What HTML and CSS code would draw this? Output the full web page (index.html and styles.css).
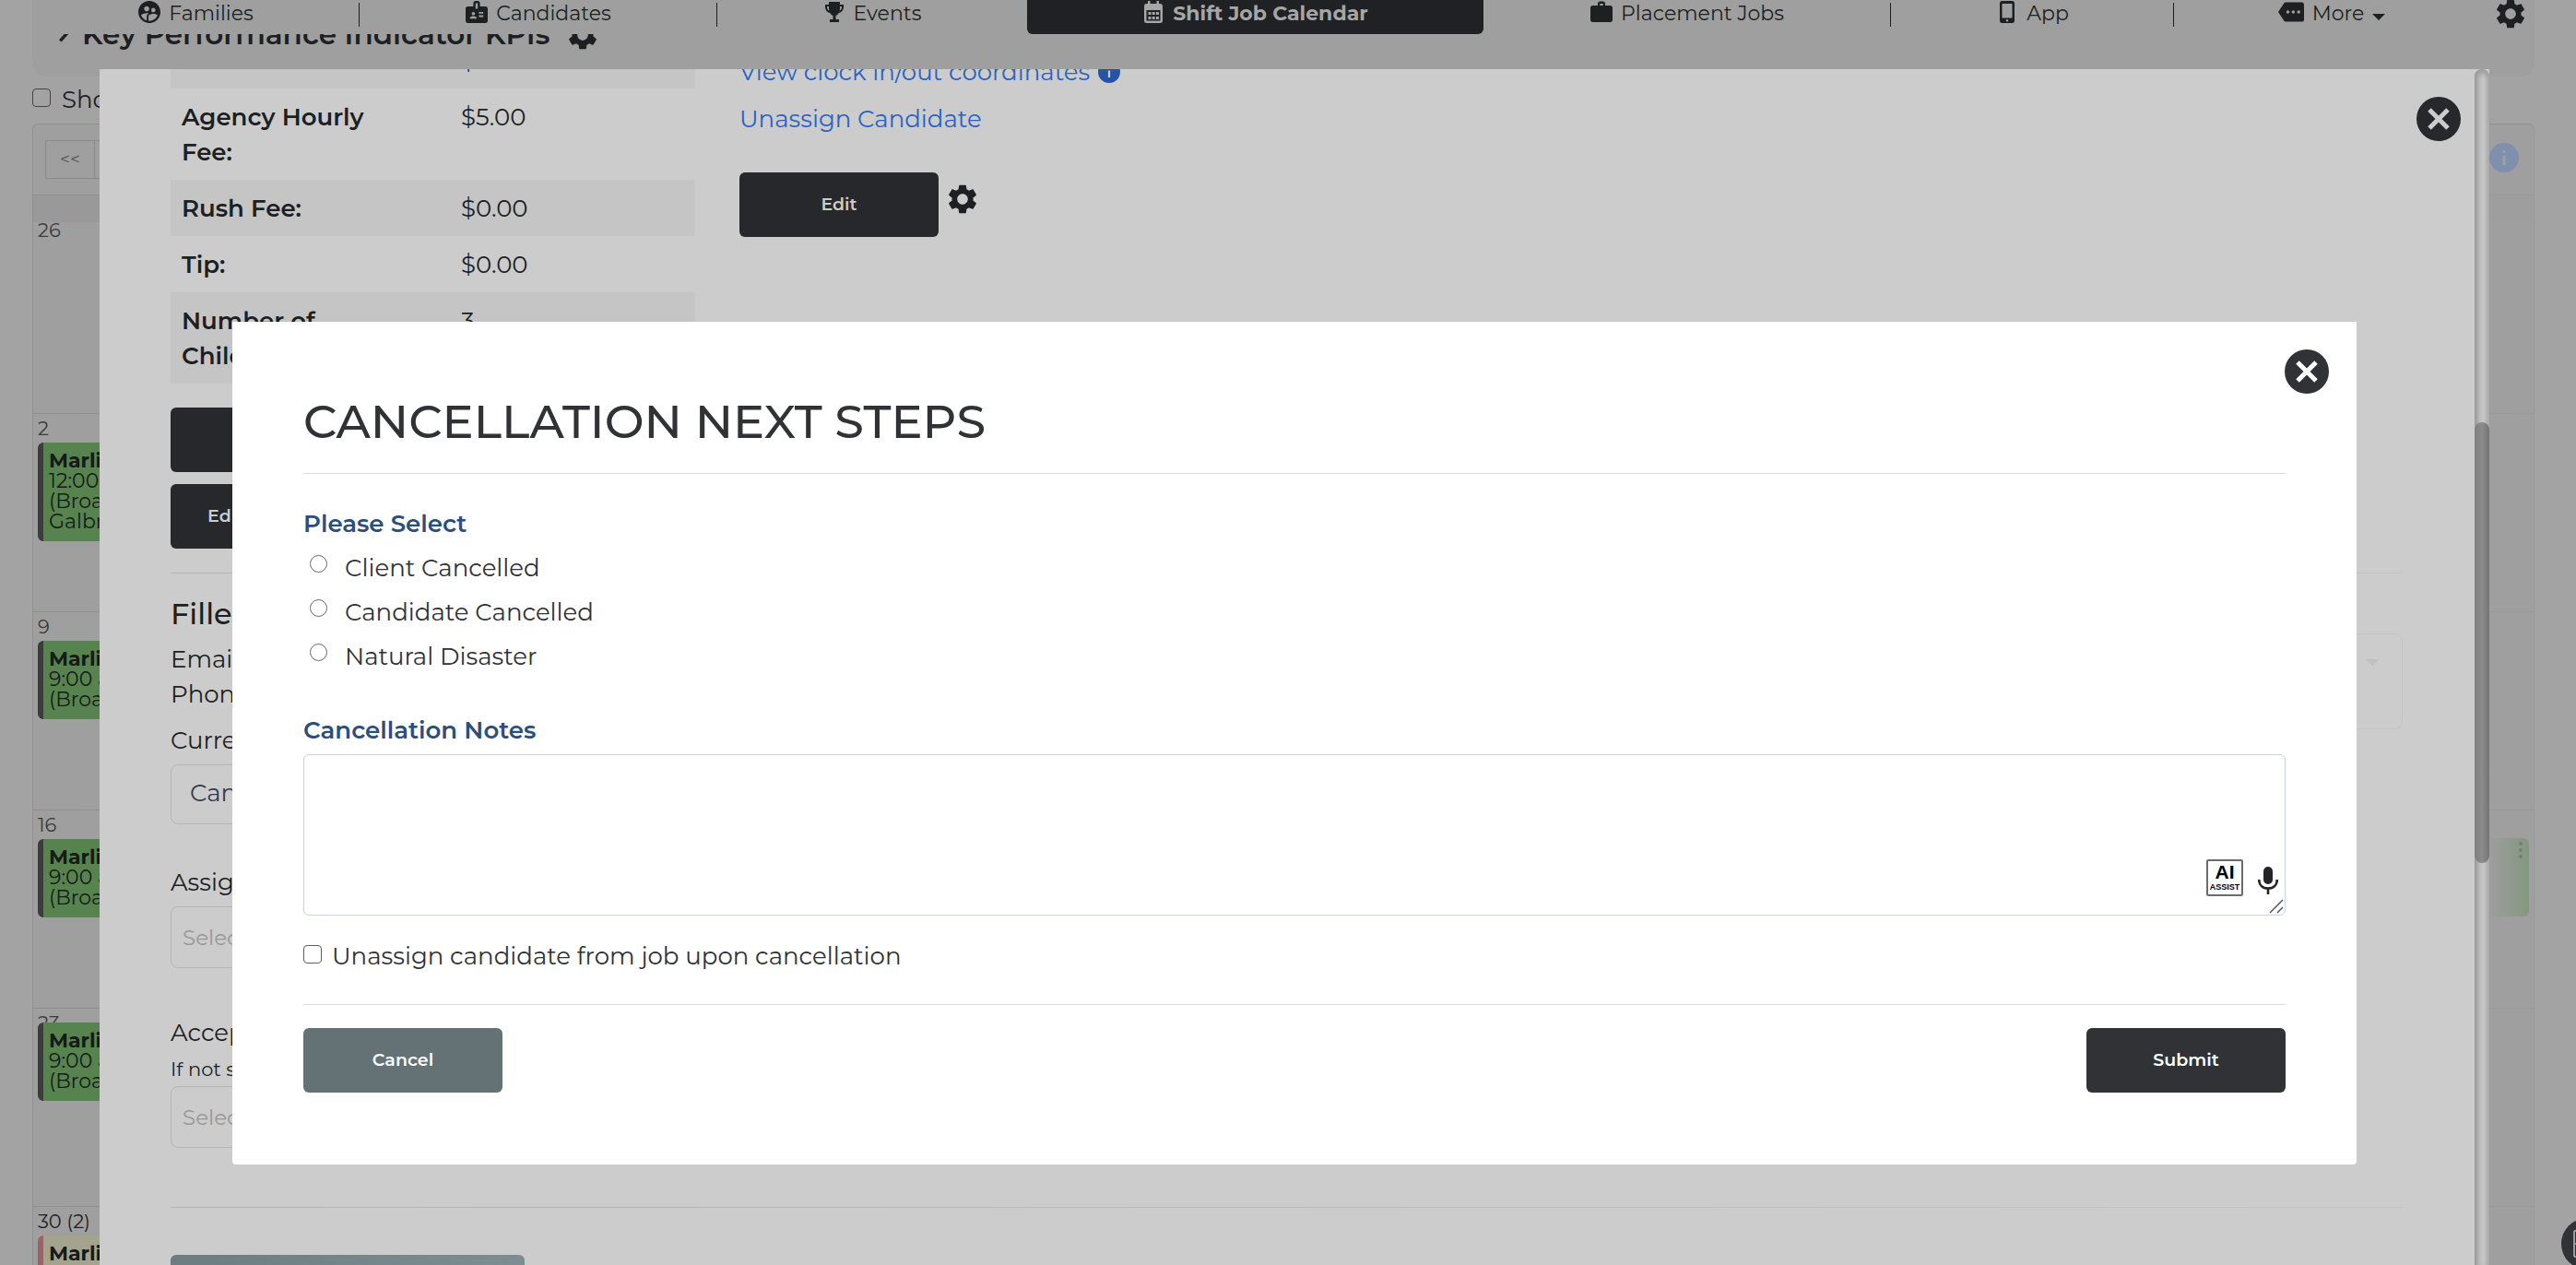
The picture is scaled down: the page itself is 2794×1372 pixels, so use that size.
FILE: index.html
```html
<!DOCTYPE html>
<html lang="en">
<head>
<meta charset="utf-8">
<title>Shift Job Calendar</title>
<link rel="stylesheet" href="styles.css">
</head>
<body>
<svg class="defs" aria-hidden="true">
  <symbol id="gear" viewBox="2 2 20 20"><path d="M19.14 12.94c.04-.3.06-.61.06-.94 0-.32-.02-.64-.07-.94l2.03-1.58c.18-.14.23-.41.12-.61l-1.92-3.32c-.12-.22-.37-.29-.59-.22l-2.39.96c-.5-.38-1.03-.7-1.62-.94l-.36-2.54c-.04-.24-.24-.41-.48-.41h-3.84c-.24 0-.43.17-.47.41l-.36 2.54c-.59.24-1.13.57-1.62.94l-2.39-.96c-.22-.08-.47 0-.59.22L2.74 8.87c-.12.21-.08.47.12.61l2.03 1.58c-.05.3-.09.63-.09.94s.02.64.07.94l-2.03 1.58c-.18.14-.23.41-.12.61l1.92 3.32c.12.22.37.29.59.22l2.39-.96c.5.38 1.03.7 1.62.94l.36 2.54c.05.24.24.41.48.41h3.84c.24 0 .44-.17.47-.41l.36-2.54c.59-.24 1.13-.56 1.62-.94l2.39.96c.22.08.47 0 .59-.22l1.92-3.32c.12-.22.07-.47-.12-.61l-2.01-1.58zM12 15.6c-1.98 0-3.6-1.62-3.6-3.6s1.62-3.6 3.6-3.6 3.6 1.62 3.6 3.6-1.62 3.6-3.6 3.6z"/></symbol>
  <symbol id="close" viewBox="0 0 48 48"><circle cx="24" cy="24" r="24"/><path d="M14 14 34 34M34 14 14 34" fill="none" stroke="var(--cross)" stroke-width="5"/></symbol>
  <symbol id="info" viewBox="0 0 32 32"><circle cx="16" cy="16" r="16"/><path d="M14.500 8h3v3h-3zM14.500 14h3v10h-3z" fill="var(--cross)"/></symbol>
</svg>

<nav class="nav">
  <a href="#"><svg viewBox="2 2 20 20"><path d="M11.99 2c-5.520 0-10 4.480-10 10s4.480 10 10 10 10-4.480 10-10-4.480-10-10-10zm3.610 6.340c1.070 0 1.930.860 1.930 1.930 0 1.070-.860 1.930-1.930 1.930-1.070 0-1.930-.860-1.930-1.930-.010-1.070.860-1.930 1.930-1.930zm-6-1.580c1.300 0 2.360 1.060 2.360 2.360 0 1.300-1.060 2.360-2.360 2.360s-2.360-1.060-2.360-2.360c0-1.310 1.050-2.360 2.360-2.360zm0 9.130v3.750c-2.400-.750-4.300-2.600-5.140-4.960 1.050-1.120 3.670-1.690 5.140-1.690.530 0 1.200.080 1.900.220-1.640.870-1.900 2.020-1.900 2.680zM11.990 20c-.270 0-.530-.010-.790-.040v-4.070c0-1.420 2.940-2.130 4.400-2.130 1.070 0 2.920.390 3.840 1.150-1.170 2.970-4.060 5.090-7.450 5.090z"/></svg>Families</a>
  <a href="#"><svg viewBox="2 2 20 20"><path d="M20 7h-5V4c0-1.100-.900-2-2-2h-2c-1.100 0-2 .900-2 2v3H4c-1.100 0-2 .900-2 2v11c0 1.100.900 2 2 2h16c1.100 0 2-.900 2-2V9c0-1.100-.900-2-2-2zM9 12c.830 0 1.500.670 1.500 1.500S9.830 15 9 15s-1.500-.670-1.500-1.500S8.170 12 9 12zm3 6H6v-.750c0-1 2-1.500 3-1.500s3 .500 3 1.500V18zm1-9h-2V4h2v5zm5 7.500h-4V15h4v1.500zm0-3h-4V12h4v1.500z"/></svg>Candidates</a>
  <a href="#" class="no-line"><svg viewBox="0 0 24 24"><path d="M6 1h12v3h4v2c0 4-2 6.500-5.200 7-.9 1.600-2 2.500-3.300 2.900V20H17v3H7v-3h3.500v-4.100C9.200 15.500 8.100 14.600 7.200 13 4 12.500 2 10 2 6V4h4zM4 6c0 2.300.8 3.900 2.300 4.600C6 9.300 6 7.500 6 6zm16 0h-2c0 1.500 0 3.300-.3 4.600C19.200 9.900 20 8.300 20 6z"/></svg>Events</a>
  <a href="#" class="active no-line"><svg viewBox="0 0 24 24"><path fill-rule="evenodd" d="M6 0h2.500v3h7V0H18v3h1.500C21 3 22 4 22 5.500v16c0 1.500-1 2.500-2.500 2.500h-15C3 24 2 23 2 21.500v-16C2 4 3 3 4.500 3H6zM4.500 10v11.500h15V10zM6.500 12h3v3h-3zm4.200 0h3v3h-3zm4.200 0h3v3h-3zm-8.400 5h3v3h-3zm4.200 0h3v3h-3zm4.200 0h3v3h-3z"/></svg>Shift Job Calendar</a>
  <a href="#"><svg viewBox="0 0 24 24"><path fill-rule="evenodd" d="M8 5V3c0-1.500 1-2.500 2.500-2.500h3C15 .5 16 1.500 16 3v2h5.500C23 5 24 6 24 7.500v13c0 1.500-1 2.500-2.500 2.500h-19C1 23 0 22 0 20.500v-13C0 6 1 5 2.500 5zm2.300 0h3.400V3h-3.400z"/></svg>Placement Jobs</a>
  <a href="#"><svg viewBox="0 0 24 24"><path fill-rule="evenodd" d="M6.500 0h11C19 0 20 1 20 2.500v19c0 1.500-1 2.500-2.500 2.500h-11C5 24 4 23 4 21.500v-19C4 1 5 0 6.500 0zM6.500 3v15.500h11V3zM12 20a1.300 1.300 0 1 0 0 2.600 1.300 1.300 0 0 0 0-2.600z"/></svg>App</a>
  <a href="#" class="no-line"><svg class="wide" viewBox="0 2 24 20"><path d="M22 3H7c-.690 0-1.230.350-1.590.880L0 12l5.410 8.110c.360.530.970.890 1.660.890H22c1.100 0 2-.900 2-2V5c0-1.100-.900-2-2-2zM9 13.500a1.500 1.500 0 1 1 0-3 1.500 1.500 0 0 1 0 3zm5 0a1.500 1.500 0 1 1 0-3 1.500 1.500 0 0 1 0 3zm5 0a1.500 1.500 0 1 1 0-3 1.500 1.500 0 0 1 0 3z"/></svg>More<i class="caret"></i></a>
  <button class="icon-button" aria-label="Settings"><svg><use href="#gear"/></svg></button>
</nav>

<main class="page">
  <section class="kpi">
    <svg class="chevron" viewBox="0 0 14 24"><path d="M2 2l9 10L2 22" fill="none" stroke="currentColor" stroke-width="3"/></svg>
    <h2>Key Performance Indicator KPIs</h2>
    <svg class="gear"><use href="#gear"/></svg>
  </section>
  <label class="show"><input type="checkbox"> Show All</label>
  <section class="calendar">
    <div class="toolbar"><div class="pager"><button>&lt;&lt;</button><button>&lt;</button></div><svg class="cal-info"><use href="#info"/></svg></div>
    <div class="day-head"></div>
    <div class="week first"><div>26</div></div>
    <div class="week"><div>2<article class="event"><b>Marlin</b><br>12:00 pm<br>(Broadway)<br>Galbraith</article></div></div>
    <div class="week"><div>9<article class="event"><b>Marlin</b><br>9:00 am<br>(Broadway)</article></div></div>
    <div class="week"><div>16<article class="event"><b>Marlin</b><br>9:00 am<br>(Broadway)</article></div><div class="last"><article class="event pale"><i></i><i></i><i></i></article></div></div>
    <div class="week"><div>23<article class="event raised"><b>Marlin</b><br>9:00 am<br>(Broadway)</article></div></div>
    <div class="week today"><div>30 (2)<article class="event beige"><b>Marlin</b></article></div></div>
  </section>
</main>

<section class="job-modal">
  <div class="job-body">
    <div class="job-top">
      <table>
        <tr><th>Service Fee:</th><td>$0.00</td></tr>
        <tr><th>Agency Hourly Fee:</th><td>$5.00</td></tr>
        <tr><th>Rush Fee:</th><td>$0.00</td></tr>
        <tr><th>Tip:</th><td>$0.00</td></tr>
        <tr><th>Number of Children:</th><td>3</td></tr>
      </table>
      <div class="links">
        <p><a href="#">View clock in/out coordinates</a><svg class="info"><use href="#info"/></svg></p>
        <p><a href="#">Unassign Candidate</a></p>
        <div class="edit-row"><button class="btn">Edit</button><svg class="gear"><use href="#gear"/></svg></div>
      </div>
    </div>
    <div class="stack"><button class="btn wide">View</button><button class="btn wide">Edit Job</button></div>
    <hr>
    <div class="filled">
      <div class="details">
        <h3>Filled By</h3>
        <p>Email:<br>Phone:</p>
        <label for="status">Current Status</label>
        <select id="status"><option>Candidate</option></select>
        <label for="assign" class="spaced">Assigned</label>
        <input id="assign" placeholder="Select">
        <label for="accept" class="spaced">Accepted</label>
        <small>If not selected</small>
        <input id="accept" placeholder="Select">
      </div>
      <div class="picker"><i class="caret"></i></div>
    </div>
    <hr class="lower">
    <button class="more-btn" aria-label="More details"></button>
  </div>
  <button class="close" aria-label="Close job"><svg><use href="#close"/></svg></button>
  <div class="track"><div class="thumb"></div></div>
</section>

<form class="cancel-modal" onsubmit="return false">
  <button type="button" class="close" aria-label="Close"><svg><use href="#close"/></svg></button>
  <h1>CANCELLATION NEXT STEPS</h1>
  <hr>
  <fieldset>
    <legend>Please Select</legend>
    <label><input type="radio" name="reason">Client Cancelled</label>
    <label><input type="radio" name="reason">Candidate Cancelled</label>
    <label><input type="radio" name="reason">Natural Disaster</label>
  </fieldset>
  <label class="title" for="notes">Cancellation Notes</label>
  <div class="notes">
    <textarea id="notes"></textarea>
    <div class="tools">
      <button type="button" class="ai"><b>AI</b><span>ASSIST</span></button>
      <button type="button" class="mic" aria-label="Dictate"><svg viewBox="0 0 22 30"><rect x="6" y="0" width="10" height="19" rx="5"/><path d="M1.200 14c0 6 4 9.500 9.800 9.500s9.800-3.500 9.800-9.500M11 23v7" fill="none" stroke="currentColor" stroke-width="2.600"/></svg></button>
    </div>
    <svg class="grip" viewBox="0 0 16 16"><path d="M1 15 15 1M9 15l6-6" stroke="#555" stroke-width="1.500"/></svg>
  </div>
  <label class="check"><input type="checkbox">Unassign candidate from job upon cancellation</label>
  <hr>
  <div class="actions"><button type="button" class="btn grey">Cancel</button><button class="btn">Submit</button></div>
</form>

<button class="chat" aria-label="Chat"><svg viewBox="0 0 56 56"><path d="M14 14v28M14 14h20M14 28h20M14 42h20" fill="none" stroke="#9a9a9a" stroke-width="2"/></svg></button>
</body>
</html>
```
FILE: styles.css
```css
* { box-sizing: border-box; }
body {
  margin: 0;
  height: 100vh;
  overflow: hidden;
  background: #a3a3a3;
  color: #1d1f22;
  font: 400 26px/38px Montserrat, Inter, sans-serif;
}
button, input, select, textarea { font: inherit; color: inherit; margin: 0; }
button { padding: 0; border: 0; background: none; }
h1, h2, h3, p { margin: 0; }
svg { display: block; flex: none; fill: currentColor; }
.defs { position: absolute; width: 0; height: 0; }
.caret { border: 7px solid transparent; border-top-color: currentColor; border-bottom: 0; }
.gear { width: 32px; height: 32px; }
input[type="checkbox"] {
  appearance: none;
  flex: none;
  width: 20px;
  height: 20px;
  border: 1px solid #5c5c5c;
  border-radius: 4px;
}

/* top navigation */
.nav {
  position: relative;
  z-index: 1;
  display: grid;
  grid-template-columns: 355fr 388fr 336fr 495fr 442fr 307fr 342fr 49fr;
  height: 37px;
  margin: 0 45px 0 35px;
  background: #9f9f9f;
}
.nav a {
  position: relative;
  display: flex;
  align-items: center;
  justify-content: center;
  gap: 9px;
  height: 37px;
  padding-bottom: 7px;
  color: inherit;
  font-size: 22px;
  line-height: 30px;
  text-decoration: none;
}
.nav a::after {
  content: "";
  position: absolute;
  right: 0;
  top: 3px;
  width: 1px;
  height: 26px;
  background: #1d1f22;
}
.nav .no-line::after { display: none; }
.nav svg { width: 24px; height: 24px; margin-bottom: 4px; }
.nav svg.wide { width: 28px; }
.nav .caret { margin-top: 6px; }
.nav .active {
  border-radius: 0 0 6px 6px;
  background: #1f2124;
  color: #a6a6a6;
  font-weight: 700;
}
.nav .icon-button svg { width: 32px; height: 32px; margin: -1px 0 6px 7px; }

/* calendar page */
.page { margin: 0 45px 0 35px; }
.kpi {
  display: flex;
  gap: 14px;
  height: 46px;
  padding-left: 28px;
  border-radius: 0 0 16px 16px;
  background: #9f9f9f;
}
.kpi .chevron { width: 16px; height: 28px; margin-top: -18px; }
.kpi h2 { margin: -19px 5px 0 -4px; font-size: 31px; font-weight: 600; }
.kpi .gear { margin-top: -15px; }
.show { display: flex; align-items: center; gap: 12px; width: 200px; margin: 6px 0 7px; }
.check input, .show input { margin-bottom: 4px; }
.show input { border-color: #444; }
.calendar { border: 1px solid #919191; border-right-color: #999; border-radius: 6px 6px 0 0; background: #9f9f9f; }
.toolbar { display: flex; justify-content: space-between; height: 76px; padding: 17px 16px 0 13px; }
.pager { display: flex; height: 42px; }
.pager button { width: 54px; border: 1px solid #8a8a8a; margin-right: -1px; color: #555; font-size: 19px; }
.cal-info { --cross: #a0a0a0; width: 32px; height: 32px; margin-top: 3px; color: #7f8fae; }
.day-head {
  height: 22px;
  background: linear-gradient(90deg, #8f8f8f, #9a9a9a) top / 100% 1px no-repeat, linear-gradient(90deg, #999, #9e9e9e);
}
.week {
  display: grid;
  grid-template-columns: repeat(7, 1fr);
  height: 215px;
  padding-top: 2px;
  background: linear-gradient(90deg, #8f8f8f, #9a9a9a) top / 100% 1px no-repeat;
  color: #3b3b3b;
  font-size: 21px;
  line-height: 30px;
}
.week.first { background: linear-gradient(90deg, #999, #9e9e9e) top / 100% 8px no-repeat; }
.week > div { padding-left: 5px; }
.week.today { color: #1d1f22; }
.week .last { grid-column: 7; padding: 29px 5px 0 0; }
.event {
  padding: 9px 0 10px 6px;
  border-left: 6px solid #3c3c3c;
  border-radius: 6px;
  background: #57834e;
  color: #17191a;
  font-size: 22px;
  line-height: 22px;
}
.event.raised { position: relative; margin-top: -16px; }
.event.beige { border-color: #9b6464; background: #a3a38e; }
.event.pale {
  display: grid;
  justify-items: end;
  align-content: start;
  gap: 3px;
  height: 85px;
  padding: 4px 7px;
  border: 0;
  background: linear-gradient(90deg, #9f9f9f 88%, #84977f);
}
.pale i { width: 4px; height: 4px; border-radius: 2px; background: #6f826f; }

/* job details modal */
.job-modal {
  position: fixed;
  z-index: 2;
  inset: 75px 94px 0 108px;
  overflow: hidden;
  background: #ccc;
}
.job-body { margin: -40px 94px 0 77px; }
.job-top { display: flex; gap: 48px; }
table { width: 569px; border-collapse: collapse; table-layout: fixed; }
tr:nth-child(odd) { background: #c5c5c5; }
th, td { padding: 12px 12px 11px; text-align: left; vertical-align: top; }
th { width: 303px; padding-right: 90px; font-weight: 600; }
.links p { display: flex; gap: 9px; margin: 24px 0 -11px; }
.links a { color: #2b62c4; text-decoration: none; }
.links .info { --cross: #ccc; width: 24px; height: 24px; margin-top: 7px; color: #2454a8; }
.edit-row { display: flex; gap: 10px; margin-top: 50px; }
.edit-row .gear { margin-top: 13px; }
.btn {
  width: 216px;
  height: 70px;
  border-radius: 6px;
  background: #313236;
  color: #fff;
  font-size: 19px;
  font-weight: 600;
}
.job-modal .btn { background: #27282b; color: #ccc; }
.btn.wide { width: 569px; }
.stack { display: grid; gap: 13px; margin-top: 26px; }
.stack .btn:last-child { padding-left: 40px; text-align: left; }
hr { height: 1px; margin: 0; border: 0; background: #dcdcdc; }
.job-modal hr { margin: 26px 0 25px; background: linear-gradient(90deg, #b4b4b4, #c4c4c4); }
.filled { display: flex; justify-content: space-between; }
.details { width: 1100px; }
.details h3 { margin-bottom: 11px; font-size: 32px; font-weight: 500; }
.details p { margin-bottom: 12px; }
.details label, .details small { display: block; }
.details small { margin-top: 6px; font-size: 21px; line-height: 30px; }
.details select, .details input {
  display: block;
  width: 100%;
  height: 67px;
  margin-top: 7px;
  padding: 0 20px;
  border: 1px solid #b4b4b4;
  border-radius: 8px;
  background: #ccc;
  color: #2f3d50;
  appearance: none;
}
.details select { height: 65px; padding-bottom: 3px; }
.details input { padding: 0 12px; font-size: 23px; }
.details input::placeholder { color: #989898; opacity: 1; }
.details small + input { margin-top: 3px; }
.details .spaced { margin-top: 44px; }
.details input + .spaced { margin-top: 51px; }
.picker {
  display: flex;
  justify-content: flex-end;
  width: 900px;
  height: 104px;
  margin-top: 40px;
  padding: 27px 25px;
  border: 1px solid #c4c4c4;
  border-radius: 8px;
  color: #c0c0c0;
}
.job-modal hr.lower { margin: 64px 0 51px; }
.more-btn { width: 384px; height: 70px; border-radius: 6px; background: linear-gradient(90deg, #6c7c81, #7e8d92); }
.close { position: absolute; top: 30px; right: 31px; width: 48px; height: 48px; --cross: #ccc; color: #27282b; }
.close svg { width: 48px; height: 48px; }
.track {
  position: absolute;
  inset: 0 0 0 auto;
  width: 16px;
  padding-top: 383px;
  border-radius: 8px 8px 0 0;
  background: linear-gradient(90deg, #999, #bbb 30%, #c8c8c8 60%, #b4b4b4);
  box-shadow: inset 0 4px 6px #999;
}
.thumb { height: 478px; border-radius: 8px; background: linear-gradient(90deg, #808080, #8b8b8b 50%, #747474); }

/* cancellation dialog */
.cancel-modal {
  position: fixed;
  z-index: 3;
  inset: 349px 238px auto 252px;
  padding: 78px 77px 78px 77px;
  border-radius: 0 0 4px 4px;
  background: #fff;
  color: #313236;
}
.cancel-modal .close { right: 30px; --cross: #fff; color: #313236; }
h1 { margin-bottom: 26px; font-size: 51px; font-weight: 500; line-height: 60px; }
fieldset { display: grid; gap: 10px; margin: 35px 0 42px; padding: 0; border: 0; }
legend { margin-bottom: 10px; padding: 0; }
legend, .title { color: #2c4e7b; font-weight: 600; }
fieldset label { display: flex; gap: 19px; }
input[type="radio"] {
  appearance: none;
  width: 19px;
  height: 19px;
  margin: 5px 0 0 7px;
  border: 1px solid #6b6b6b;
  border-radius: 50%;
}
.title { display: block; }
.notes { position: relative; margin-top: 7px; }
textarea {
  display: block;
  width: 100%;
  height: 175px;
  padding: 12px;
  border: 1px solid #ccd3db;
  border-radius: 6px;
  resize: none;
}
.tools { position: absolute; right: 8px; bottom: 21px; display: flex; align-items: flex-end; gap: 16px; }
.ai {
  display: grid;
  align-content: center;
  justify-items: center;
  width: 40px;
  height: 40px;
  border: 2px solid #6c6c6c;
  border-radius: 2px;
  color: #000;
  font-family: "Liberation Sans", sans-serif;
}
.ai b { font-size: 21px; line-height: 20px; }
.ai span { font-size: 9px; line-height: 12px; font-weight: 700; }
.mic { margin-bottom: 2px; color: #212529; }
.mic svg { width: 22px; height: 30px; }
.grip { position: absolute; right: 2px; bottom: 2px; width: 16px; height: 16px; }
.check { display: flex; align-items: center; gap: 11px; margin: 25px 0 33px; }
.actions { display: flex; justify-content: space-between; margin-top: 25px; }
.btn.grey { background: #647276; }

.chat {
  position: fixed;
  z-index: 4;
  right: -40px;
  bottom: -5px;
  width: 56px;
  height: 56px;
  border-radius: 50%;
  background: #313236;
}
```
